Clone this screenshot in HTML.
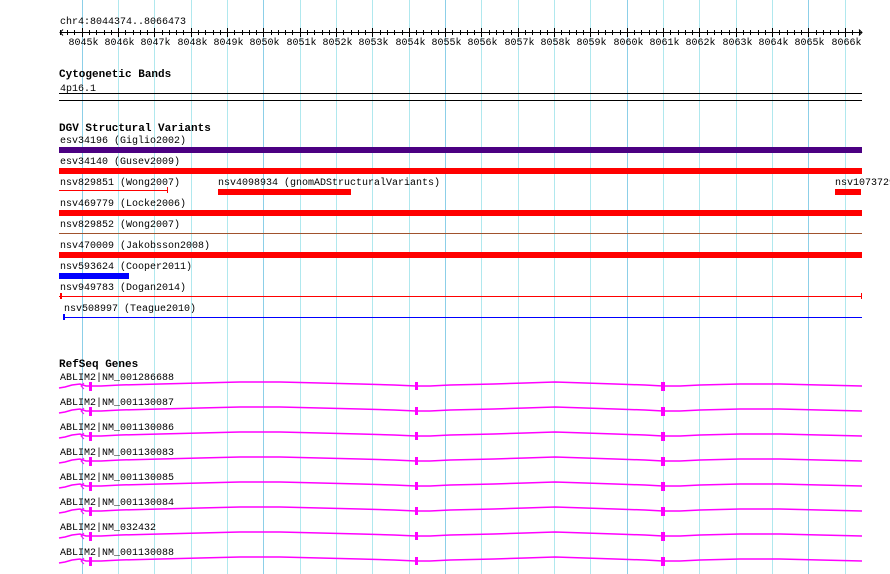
<!DOCTYPE html>
<html><head><meta charset="utf-8"><style>
html,body{margin:0;padding:0;background:#fff;width:890px;height:574px;overflow:hidden}
svg{position:absolute;left:0;top:0}
text{font-family:"Liberation Mono","DejaVu Sans Mono",monospace;font-size:10px;fill:#000}
.b{font-weight:bold;font-size:11px}
</style></head><body>
<svg id="s" width="890" height="574" xmlns="http://www.w3.org/2000/svg">
<g id="grid"></g>
<text x="60" y="24">chr4:8044374..8066473</text>
<g id="ruler"></g>
<text class="b" x="59" y="77">Cytogenetic Bands</text>
<text x="60" y="91">4p16.1</text>
<rect x="59" y="93" width="803" height="1" fill="#000"/>
<rect x="59" y="100" width="803" height="1" fill="#000"/>
<text class="b" x="59" y="131">DGV Structural Variants</text>
<text x="60" y="143">esv34196 (Giglio2002)</text>
<rect x="59" y="147" width="803" height="6" fill="#4b0082"/>
<text x="60" y="164">esv34140 (Gusev2009)</text>
<rect x="59" y="168" width="803" height="6" fill="#f00"/>
<text x="60" y="185">nsv829851 (Wong2007)</text>
<rect x="59" y="190" width="109" height="1" fill="#f00"/>
<rect x="167" y="187" width="1" height="6" fill="#f00"/>
<text x="218" y="185">nsv4098934 (gnomADStructuralVariants)</text>
<rect x="218" y="189" width="133" height="6" fill="#f00"/>
<text x="835" y="185">nsv1073729</text>
<rect x="835" y="189" width="26" height="6" fill="#f00"/>
<text x="60" y="206">nsv469779 (Locke2006)</text>
<rect x="59" y="210" width="803" height="6" fill="#f00"/>
<text x="60" y="227">nsv829852 (Wong2007)</text>
<rect x="59" y="233" width="803" height="1" fill="#a0522d"/>
<text x="60" y="248">nsv470009 (Jakobsson2008)</text>
<rect x="59" y="252" width="803" height="6" fill="#f00"/>
<text x="60" y="269">nsv593624 (Cooper2011)</text>
<rect x="59" y="273" width="70" height="6" fill="#00f"/>
<text x="60" y="290">nsv949783 (Dogan2014)</text>
<rect x="59" y="296" width="803" height="1" fill="#f00"/>
<rect x="60" y="293" width="2" height="6" fill="#f00"/>
<rect x="861" y="293" width="1" height="6" fill="#f00"/>
<text x="64" y="311">nsv508997 (Teague2010)</text>
<rect x="63" y="317" width="799" height="1" fill="#00f"/>
<rect x="63" y="314" width="2" height="6" fill="#00f"/>
<text class="b" x="59" y="367">RefSeq Genes</text>
<g id="genes"></g>
</svg>
<script>
var NS="http://www.w3.org/2000/svg";
function px(p){return 59+(p-8044374)/22099*803;}
function el(t,a,par){var e=document.createElementNS(NS,t);for(var k in a)e.setAttribute(k,a[k]);document.getElementById(par).appendChild(e);return e;}
for(var k=8045;k<=8066;k++){var x=Math.round(px(k*1000))+0.5;
 el("line",{x1:x,x2:x,y1:0,y2:574,stroke:(k%5==0)?"#8ccfe8":"#b0e8ee","stroke-width":1},"grid");
 var t=el("text",{x:x-14,y:45},"ruler");t.textContent=k+"k";}
el("line",{x1:60,x2:862,y1:32.5,y2:32.5,stroke:"#000"},"ruler");
el("path",{d:"M63 29.5 L60 32.5 L63 35.5 M859 29.5 L862 32.5 L859 35.5",stroke:"#000",fill:"none"},"ruler");
for(var p=8044400;p<8066473;p+=200){var x=Math.round(px(p))+0.5;var big=p%1000==0;
 el("line",{x1:x,x2:x,y1:big?28:30,y2:big?37:35,stroke:"#000"},"ruler");}
var names=["NM_001286688","NM_001130087","NM_001130086","NM_001130083","NM_001130085","NM_001130084","NM_032432","NM_001130088"];
for(var i=0;i<8;i++){var y=386+i*25;
 var t=el("text",{x:60,y:y-6},"genes");t.textContent="ABLIM2|"+names[i];
 var d="M59 "+(y+2)+" L65 "+(y+1)+" L72 "+(y-1)+" L80 "+(y-2)+" L86 "+y+" L90 "+y+
 " L101 "+y+" L120 "+(y-1)+" L160 "+(y-2)+" L200 "+(y-3)+" L240 "+(y-4)+" L280 "+(y-4)+" L320 "+(y-3)+" L360 "+(y-2)+" L394 "+(y-1)+" L416 "+y+
 " L430 "+y+" L450 "+(y-1)+" L494 "+(y-2)+" L525 "+(y-3)+" L555 "+(y-4)+" L585 "+(y-3)+" L615 "+(y-2)+" L645 "+(y-1)+" L663 "+y+
 " L680 "+y+" L700 "+(y-1)+" L740 "+(y-2)+" L780 "+(y-2)+" L820 "+(y-1)+" L862 "+y;
 el("path",{d:d,stroke:"#f0f",fill:"none","stroke-width":1.5},"genes");
 el("path",{d:"M84 "+(y-3)+" L81 "+y+" L84 "+(y+3),stroke:"#f0f",fill:"none"},"genes");
 el("rect",{x:89,y:y-4,width:3,height:9,fill:"#f0f"},"genes");
 el("rect",{x:415,y:y-4,width:3,height:8,fill:"#f0f"},"genes");
 el("rect",{x:661,y:y-4,width:4,height:9,fill:"#f0f"},"genes");}
</script>
</body></html>
